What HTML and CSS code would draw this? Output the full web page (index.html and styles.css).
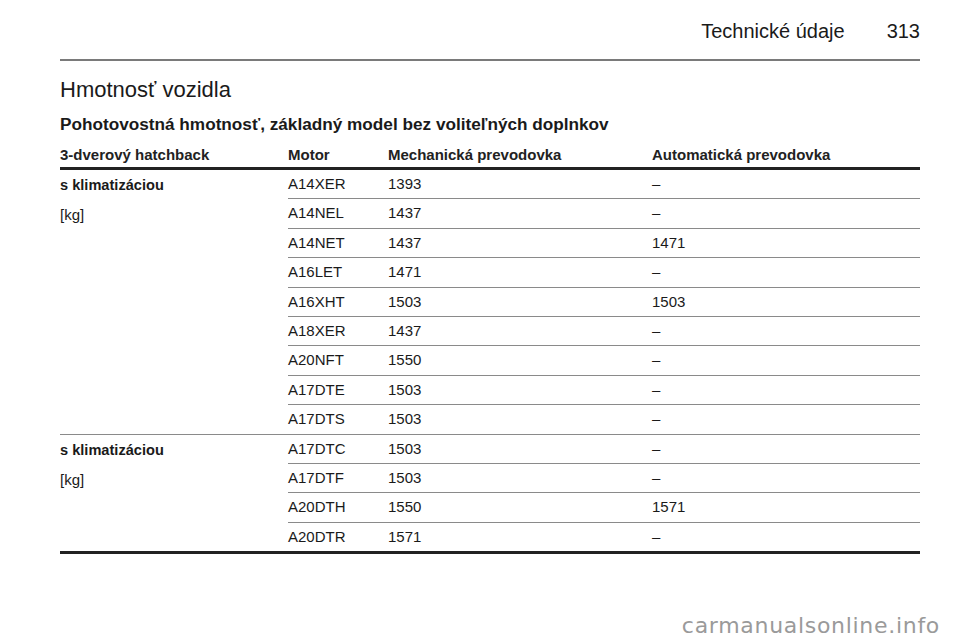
FILE: index.html
```html
<!DOCTYPE html>
<html lang="sk">
<head>
<meta charset="utf-8">
<title>Technické údaje 313</title>
<link rel="stylesheet" href="styles.css">
</head>
<body>
<div class="page">
  <header class="running-head">
    <span class="section">Technické údaje</span>
    <span class="pageno">313</span>
  </header>
  <h1 class="title">Hmotnosť vozidla</h1>
  <h2 class="subtitle">Pohotovostná hmotnosť, základný model bez voliteľných doplnkov</h2>
  <table class="spec">
    <colgroup>
      <col class="c1"><col class="c2"><col class="c3"><col class="c4">
    </colgroup>
    <thead>
      <tr>
        <th>3-dverový hatchback</th>
        <th>Motor</th>
        <th>Mechanická prevodovka</th>
        <th>Automatická prevodovka</th>
      </tr>
    </thead>
    <tbody class="group">
      <tr><td class="lbl" rowspan="9"><b>s klimatizáciou</b><br>[kg]</td><td>A14XER</td><td>1393</td><td>–</td></tr>
      <tr><td>A14NEL</td><td>1437</td><td>–</td></tr>
      <tr><td>A14NET</td><td>1437</td><td>1471</td></tr>
      <tr><td>A16LET</td><td>1471</td><td>–</td></tr>
      <tr><td>A16XHT</td><td>1503</td><td>1503</td></tr>
      <tr><td>A18XER</td><td>1437</td><td>–</td></tr>
      <tr><td>A20NFT</td><td>1550</td><td>–</td></tr>
      <tr><td>A17DTE</td><td>1503</td><td>–</td></tr>
      <tr><td>A17DTS</td><td>1503</td><td>–</td></tr>
    </tbody>
    <tbody class="group end">
      <tr><td class="lbl" rowspan="4"><b>s klimatizáciou</b><br>[kg]</td><td>A17DTC</td><td>1503</td><td>–</td></tr>
      <tr><td>A17DTF</td><td>1503</td><td>–</td></tr>
      <tr><td>A20DTH</td><td>1550</td><td>1571</td></tr>
      <tr class="last"><td>A20DTR</td><td>1571</td><td>–</td></tr>
    </tbody>
  </table>
  <div class="watermark">carmanualsonline.info</div>
</div>
</body>
</html>
```

FILE: styles.css
```css
html, body {
  margin: 0;
  padding: 0;
  background: #ffffff;
}
body {
  font-family: "Liberation Sans", Arial, sans-serif;
  color: #1a1a1a;
  width: 960px;
  height: 642px;
  overflow: hidden;
}
.page {
  position: relative;
  padding: 0 40px 0 60px;
  height: 642px;
  box-sizing: border-box;
}
.running-head {
  display: flex;
  justify-content: flex-end;
  gap: 42px;
  font-size: 20px;
  height: 61px;
  box-sizing: border-box;
  padding-top: 20px;
  line-height: 22px;
  border-bottom: 2px solid #7a7a7a;
}
.title {
  margin: 0;
  font-weight: normal;
  font-size: 22px;
  line-height: 24px;
  padding-top: 17px;
}
.subtitle {
  margin: 0;
  font-weight: bold;
  font-size: 17.2px;
  line-height: 20px;
  padding-top: 12px;
}
.spec {
  border-collapse: separate;
  border-spacing: 0;
  table-layout: fixed;
  width: 860px;
  margin-top: 13px;
  font-size: 15px;
}
.c1 { width: 228px; }
.c2 { width: 100px; }
.c3 { width: 264px; }
.c4 { width: 268px; }
.spec th {
  text-align: left;
  font-weight: bold;
  color: #222;
  padding: 0 0 4px 0;
  line-height: 16px;
  border-bottom: 3px solid #222;
}
.spec td {
  padding: 0;
  line-height: 28.4px;
  vertical-align: middle;
  border-bottom: 1px solid #8a8a8a;
}
.spec td.lbl {
  vertical-align: top;
  line-height: 29.4px;
}
.spec td.lbl b {
  font-weight: bold;
  font-size: 14.6px;
}
.group.end tr.last td,
.group.end td.lbl {
  border-bottom: 3px solid #222;
}
.watermark {
  position: absolute;
  right: 20px;
  bottom: 3px;
  font-family: "DejaVu Sans", sans-serif;
  font-size: 22px;
  line-height: 26px;
  letter-spacing: 0.7px;
  color: #9a9a9a;
}
```
